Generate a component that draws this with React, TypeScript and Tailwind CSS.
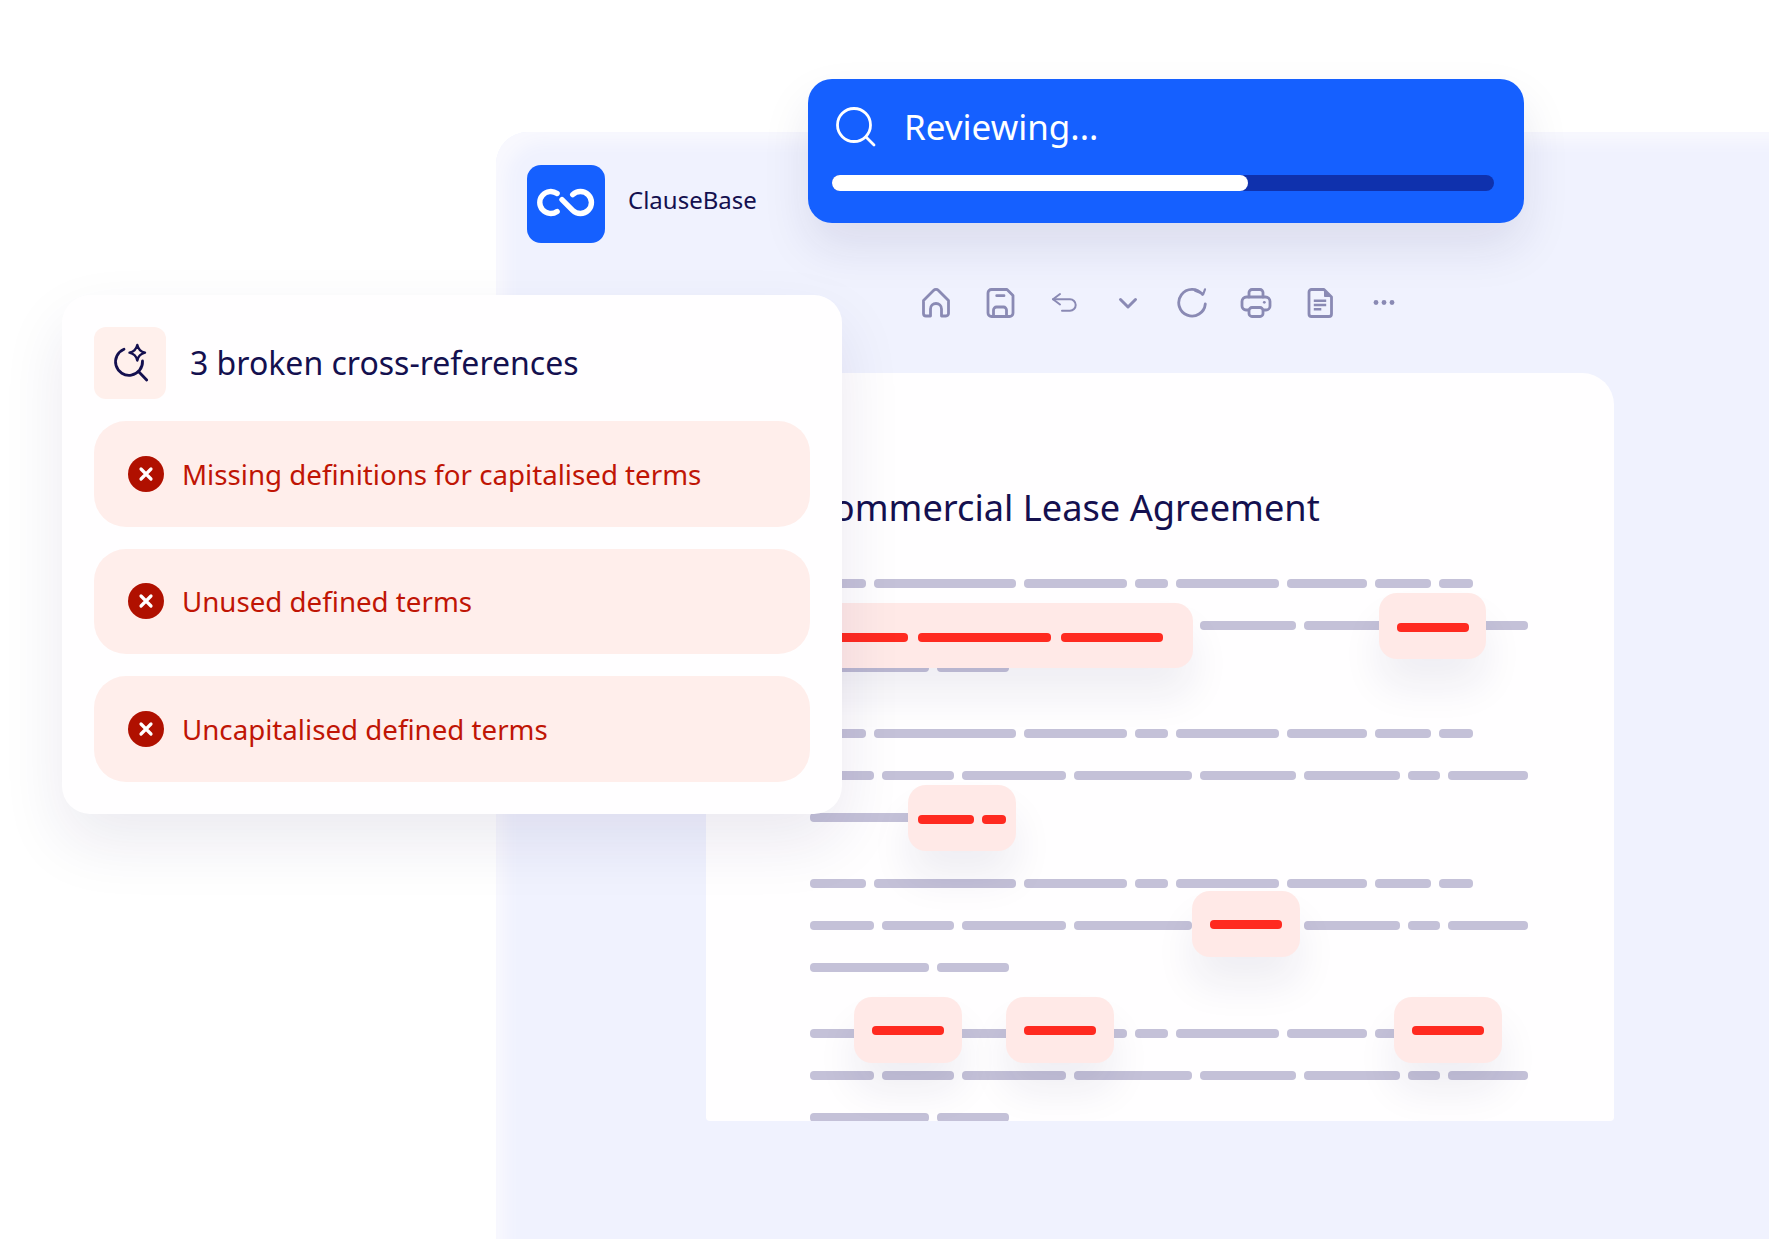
const sans = "font-['Noto_Sans',sans-serif]";

const patternA = [56, 142, 103, 33, 103, 80, 56, 34];
const patternB = [64, 72, 104, 118, 96, 96, 32, 80];
const patternC = [119, 72];
const paragraphs = [0, 1, 2, 3];

const highlights = [
  { left: 74, top: 230, width: 413, height: 65, bars: [98, 133, 102], gap: 10, pad: 'justify-end pr-[30px] pt-[4px]' },
  { left: 673, top: 220, width: 107, height: 66, bars: [72], gap: 8, pad: 'justify-center pt-[3px]' },
  { left: 202, top: 412, width: 108, height: 66, bars: [56, 24], gap: 8, pad: 'justify-center pt-[3px]' },
  { left: 486, top: 518, width: 108, height: 66, bars: [72], gap: 8, pad: 'justify-center' },
  { left: 148, top: 624, width: 108, height: 66, bars: [72], gap: 8, pad: 'justify-center' },
  { left: 300, top: 624, width: 108, height: 66, bars: [72], gap: 8, pad: 'justify-center' },
  { left: 688, top: 624, width: 108, height: 66, bars: [72], gap: 8, pad: 'justify-center' },
];

const issues = [
  'Missing definitions for capitalised terms',
  'Unused defined terms',
  'Uncapitalised defined terms',
];

function TextRow({ widths }: { widths: number[] }) {
  return (
    <div className="flex gap-2">
      {widths.map((w, i) => (
        <div key={i} className="h-[9px] rounded-[4px] bg-[#c4c1d8]" style={{ width: w }} />
      ))}
    </div>
  );
}

function ToolIcon({ children }: { children: React.ReactNode }) {
  return (
    <svg
      viewBox="0 0 32 32"
      className="h-8 w-8"
      fill="none"
      stroke="#8a8ab4"
      strokeWidth="2.8"
      strokeLinecap="round"
      strokeLinejoin="round"
    >
      {children}
    </svg>
  );
}

function Toolbar() {
  return (
    <div className="ml-[393px] mt-[44px] flex gap-8">
      <ToolIcon>
        <path d="M3.500 13.500 13.500 3.500a3.500 3.500 0 0 1 5 0l10 10V26.500a2.500 2.500 0 0 1-2.500 2.500h-4.500v-7a5.500 5.500 0 0 0-11 0v7H6a2.500 2.500 0 0 1-2.500-2.500Z" />
      </ToolIcon>
      <ToolIcon>
        <path d="M4 6a3.500 3.500 0 0 1 3.500-3.500H23l6 6V26a3.500 3.500 0 0 1-3.500 3.500h-18A3.500 3.500 0 0 1 4 26Z" />
        <path d="M12.700 8.700H20M9.500 29.500V23a3 3 0 0 1 3-3h7a3 3 0 0 1 3 3v6.500" />
      </ToolIcon>
      <ToolIcon>
        <path d="M12 7 5 12.300 12 17.500" strokeWidth="2" />
        <path d="M5 12.300h17a5.700 5.700 0 0 1 0 11.400h-8" strokeWidth="2" />
      </ToolIcon>
      <ToolIcon>
        <path d="m8.500 12.500 7.500 7.500 7.500-7.500" strokeWidth="3" />
      </ToolIcon>
      <ToolIcon>
        <path d="M26.500 7.500A13.300 13.300 0 1 0 29.300 17" />
        <path d="M19 3.700 27.300 7 29 2.300" strokeWidth="2.200" />
      </ToolIcon>
      <ToolIcon>
        <path d="M8 23H6a4 4 0 0 1-4-4v-4.500A4.500 4.500 0 0 1 6.500 10h19a4.500 4.500 0 0 1 4.500 4.500V19a4 4 0 0 1-4 4h-2" />
        <path d="M9 10V5.500a3 3 0 0 1 3-3h8a3 3 0 0 1 3 3V10" />
        <rect x="9" y="20.500" width="14" height="9" rx="3" />
        <circle cx="24.300" cy="15.300" r="1.400" fill="#8a8ab4" stroke="none" />
      </ToolIcon>
      <ToolIcon>
        <path d="M5 5a2.500 2.500 0 0 1 2.500-2.500H20L27.500 10v17a2.500 2.500 0 0 1-2.500 2.500H7.500A2.500 2.500 0 0 1 5 27Z" />
        <path d="M20.500 3.500V9.500h6Z" fill="#8a8ab4" strokeWidth="1" />
        <path d="M9.800 13.700h12.400M9.800 18h12.400M9.800 22.300h7.500" strokeWidth="2.400" strokeLinecap="butt" />
      </ToolIcon>
      <ToolIcon>
        <circle cx="8" cy="15.500" r="2.400" fill="#8a8ab4" stroke="none" />
        <circle cx="16" cy="15.500" r="2.400" fill="#8a8ab4" stroke="none" />
        <circle cx="24" cy="15.500" r="2.400" fill="#8a8ab4" stroke="none" />
      </ToolIcon>
    </div>
  );
}

function Logo() {
  return (
    <div className="h-[78px] w-[78px] rounded-[14px] bg-[#1560ff]">
      <svg viewBox="0 0 78 78" className="h-[78px] w-[78px]" fill="none" stroke="#fff" strokeWidth="5.400" strokeLinecap="round">
        <path d="M30.100 28.500A11 11 0 1 0 30.100 46.500" />
        <path d="M35 34.600 45.700 45.300A11 11 0 1 0 45.700 29.700" />
      </svg>
    </div>
  );
}

function Document() {
  return (
    <div className="relative ml-[179px] mt-[54px] h-[748px] w-[908px] overflow-hidden rounded-t-[32px] rounded-b-[4px] bg-[#fffeff] pl-[104px] pt-[109px]">
      <h1 className="text-[36.200px] leading-[50px] text-[#14104f]">Commercial Lease Agreement</h1>
      <div className="mt-[47px] flex flex-col gap-[57px]">
        {paragraphs.map(p => (
          <div key={p} className="flex flex-col gap-[33px]">
            <TextRow widths={patternA} />
            <TextRow widths={patternB} />
            <TextRow widths={patternC} />
          </div>
        ))}
      </div>
      {highlights.map((h, i) => (
        <div
          key={i}
          className={`absolute flex items-center rounded-[18px] bg-[#ffe9e7] shadow-[0_28px_40px_rgba(30,25,90,0.07)] ${h.pad}`}
          style={{ left: h.left, top: h.top, width: h.width, height: h.height, gap: h.gap }}
        >
          {h.bars.map((w, j) => (
            <div key={j} className="h-[9px] rounded-[4px] bg-[#ff2a20]" style={{ width: w }} />
          ))}
        </div>
      ))}
    </div>
  );
}

function ReviewCard() {
  return (
    <div className="absolute left-[808px] top-[79px] flex h-[144px] w-[716px] flex-col rounded-[24px] bg-[#1560ff] px-[24px] pt-[28px] shadow-[0_24px_48px_rgba(30,25,90,0.1)]">
      <div className="flex h-[40px] items-center gap-[28px] pl-[4px]">
        <svg viewBox="0 0 40 40" className="h-10 w-10" fill="none" stroke="#fff" strokeWidth="2.800" strokeLinecap="round">
          <circle cx="18" cy="18" r="16.500" />
          <path d="m30 30 8 8" />
        </svg>
        <span className="text-[35px] leading-[40px] text-white">Reviewing...</span>
      </div>
      <div className="mt-[28px] h-4 w-[662px] rounded-[8px] bg-[#0f31ad]">
        <div className="h-4 rounded-[8px] bg-white" style={{ width: 416 }} />
      </div>
    </div>
  );
}

function IssuesCard() {
  return (
    <div className="absolute left-[62px] top-[295px] h-[519px] w-[780px] rounded-[28px] bg-[#fffeff] px-[32px] pt-[32px] shadow-[0_28px_64px_rgba(30,25,90,0.09)]">
      <div className="flex items-center gap-[24px]">
        <div className="flex h-[72px] w-[72px] items-center justify-center rounded-[12px] bg-[#fff0ec]">
          <svg viewBox="0 3 60 60" className="h-[60px] w-[60px]" fill="none" stroke="#14104f" strokeWidth="2.800" strokeLinecap="round" strokeLinejoin="round">
            <path d="M24 19.300A13.500 13.500 0 1 0 42.500 31" />
            <path d="M39 42 46.700 50" />
            <path d="M37.300 15Q38.700 21.300 45 22.700 38.700 24.100 37.300 30.500 35.900 24.100 29.500 22.700 35.900 21.300 37.300 15Z" strokeWidth="2.400" />
          </svg>
        </div>
        <span className="text-[32px] leading-[44px] text-[#14104f]">3 broken cross-references</span>
      </div>
      <div className="mt-[22px] flex flex-col gap-[22px]">
        {issues.map(text => (
          <div key={text} className="flex h-[105.500px] items-center gap-[18px] rounded-[32px] bg-[#ffeeeb] pl-[34px]">
            <svg viewBox="0 0 36 36" className="h-9 w-9 shrink-0">
              <circle cx="18" cy="18" r="18" fill="#b01000" />
              <path d="m13 13 10 10M23 13 13 23" stroke="#fff" strokeWidth="3.200" strokeLinecap="round" />
            </svg>
            <span className="text-[27.700px] leading-[40px] text-[#c01505]">{text}</span>
          </div>
        ))}
      </div>
    </div>
  );
}

export default function App() {
  return (
    <div className={`relative h-[1239px] w-full overflow-hidden bg-white pl-[496px] pt-[132px] ${sans}`}>
      <div className="h-full rounded-tl-[32px] bg-[#f0f2fe] pl-[31px] pt-[33px] shadow-[inset_16px_16px_14px_-6px_#f8f8fe]">
        <div className="flex items-center gap-[23px]">
          <Logo />
          <span className="mb-[9px] text-[24px] leading-[34px] text-[#14104f]">ClauseBase</span>
        </div>
        <Toolbar />
        <Document />
      </div>
      <IssuesCard />
      <ReviewCard />
    </div>
  );
}
